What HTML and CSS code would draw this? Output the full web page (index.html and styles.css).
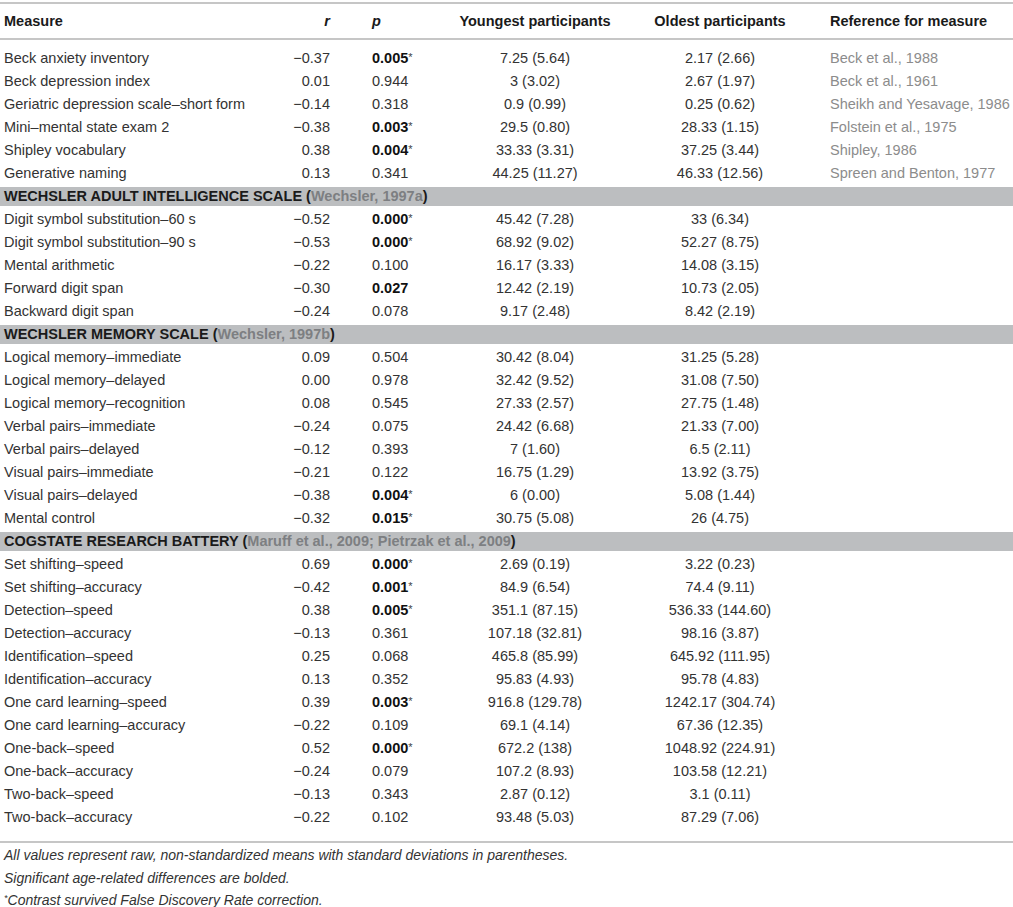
FILE: index.html
```html
<!DOCTYPE html>
<html lang="en">
<head>
    <meta charset="UTF-8">
    <meta name="viewport" content="width=device-width, initial-scale=1.0">
    <link rel="stylesheet" href="styles.css">
    <title>Age-related differences in neuropsychological measures</title>
</head>
<body class="main">

<table class="measures">
    <colgroup>
        <col class="col-measure">
        <col class="col-r">
        <col class="col-p">
        <col class="col-young">
        <col class="col-old">
        <col class="col-ref">
    </colgroup>
    <thead>
        <tr>
            <th>Measure</th>
            <th><i>r</i></th>
            <th><i>p</i></th>
            <th>Youngest participants</th>
            <th>Oldest participants</th>
            <th>Reference for measure</th>
        </tr>
    </thead>
    <tbody>
        <tr class="first"><td>Beck anxiety inventory</td><td>&minus;0.37</td><td><b>0.005</b><span class="star">*</span></td><td>7.25 (5.64)</td><td>2.17 (2.66)</td><td>Beck et al., 1988</td></tr>
        <tr><td>Beck depression index</td><td>0.01</td><td>0.944</td><td>3 (3.02)</td><td>2.67 (1.97)</td><td>Beck et al., 1961</td></tr>
        <tr><td>Geriatric depression scale&ndash;short form</td><td>&minus;0.14</td><td>0.318</td><td>0.9 (0.99)</td><td>0.25 (0.62)</td><td>Sheikh and Yesavage, 1986</td></tr>
        <tr><td>Mini&ndash;mental state exam 2</td><td>&minus;0.38</td><td><b>0.003</b><span class="star">*</span></td><td>29.5 (0.80)</td><td>28.33 (1.15)</td><td>Folstein et al., 1975</td></tr>
        <tr><td>Shipley vocabulary</td><td>0.38</td><td><b>0.004</b><span class="star">*</span></td><td>33.33 (3.31)</td><td>37.25 (3.44)</td><td>Shipley, 1986</td></tr>
        <tr><td>Generative naming</td><td>0.13</td><td>0.341</td><td>44.25 (11.27)</td><td>46.33 (12.56)</td><td>Spreen and Benton, 1977</td></tr>

        <tr class="section"><td colspan="6">WECHSLER ADULT INTELLIGENCE SCALE (<span class="cite">Wechsler, 1997a</span>)</td></tr>
        <tr><td>Digit symbol substitution&ndash;60 s</td><td>&minus;0.52</td><td><b>0.000</b><span class="star">*</span></td><td>45.42 (7.28)</td><td>33 (6.34)</td><td></td></tr>
        <tr><td>Digit symbol substitution&ndash;90 s</td><td>&minus;0.53</td><td><b>0.000</b><span class="star">*</span></td><td>68.92 (9.02)</td><td>52.27 (8.75)</td><td></td></tr>
        <tr><td>Mental arithmetic</td><td>&minus;0.22</td><td>0.100</td><td>16.17 (3.33)</td><td>14.08 (3.15)</td><td></td></tr>
        <tr><td>Forward digit span</td><td>&minus;0.30</td><td><b>0.027</b></td><td>12.42 (2.19)</td><td>10.73 (2.05)</td><td></td></tr>
        <tr><td>Backward digit span</td><td>&minus;0.24</td><td>0.078</td><td>9.17 (2.48)</td><td>8.42 (2.19)</td><td></td></tr>

        <tr class="section"><td colspan="6">WECHSLER MEMORY SCALE (<span class="cite">Wechsler, 1997b</span>)</td></tr>
        <tr><td>Logical memory&ndash;immediate</td><td>0.09</td><td>0.504</td><td>30.42 (8.04)</td><td>31.25 (5.28)</td><td></td></tr>
        <tr><td>Logical memory&ndash;delayed</td><td>0.00</td><td>0.978</td><td>32.42 (9.52)</td><td>31.08 (7.50)</td><td></td></tr>
        <tr><td>Logical memory&ndash;recognition</td><td>0.08</td><td>0.545</td><td>27.33 (2.57)</td><td>27.75 (1.48)</td><td></td></tr>
        <tr><td>Verbal pairs&ndash;immediate</td><td>&minus;0.24</td><td>0.075</td><td>24.42 (6.68)</td><td>21.33 (7.00)</td><td></td></tr>
        <tr><td>Verbal pairs&ndash;delayed</td><td>&minus;0.12</td><td>0.393</td><td>7 (1.60)</td><td>6.5 (2.11)</td><td></td></tr>
        <tr><td>Visual pairs&ndash;immediate</td><td>&minus;0.21</td><td>0.122</td><td>16.75 (1.29)</td><td>13.92 (3.75)</td><td></td></tr>
        <tr><td>Visual pairs&ndash;delayed</td><td>&minus;0.38</td><td><b>0.004</b><span class="star">*</span></td><td>6 (0.00)</td><td>5.08 (1.44)</td><td></td></tr>
        <tr><td>Mental control</td><td>&minus;0.32</td><td><b>0.015</b><span class="star">*</span></td><td>30.75 (5.08)</td><td>26 (4.75)</td><td></td></tr>

        <tr class="section"><td colspan="6">COGSTATE RESEARCH BATTERY (<span class="cite">Maruff et al., 2009; Pietrzak et al., 2009</span>)</td></tr>
        <tr><td>Set shifting&ndash;speed</td><td>0.69</td><td><b>0.000</b><span class="star">*</span></td><td>2.69 (0.19)</td><td>3.22 (0.23)</td><td></td></tr>
        <tr><td>Set shifting&ndash;accuracy</td><td>&minus;0.42</td><td><b>0.001</b><span class="star">*</span></td><td>84.9 (6.54)</td><td>74.4 (9.11)</td><td></td></tr>
        <tr><td>Detection&ndash;speed</td><td>0.38</td><td><b>0.005</b><span class="star">*</span></td><td>351.1 (87.15)</td><td>536.33 (144.60)</td><td></td></tr>
        <tr><td>Detection&ndash;accuracy</td><td>&minus;0.13</td><td>0.361</td><td>107.18 (32.81)</td><td>98.16 (3.87)</td><td></td></tr>
        <tr><td>Identification&ndash;speed</td><td>0.25</td><td>0.068</td><td>465.8 (85.99)</td><td>645.92 (111.95)</td><td></td></tr>
        <tr><td>Identification&ndash;accuracy</td><td>0.13</td><td>0.352</td><td>95.83 (4.93)</td><td>95.78 (4.83)</td><td></td></tr>
        <tr><td>One card learning&ndash;speed</td><td>0.39</td><td><b>0.003</b><span class="star">*</span></td><td>916.8 (129.78)</td><td>1242.17 (304.74)</td><td></td></tr>
        <tr><td>One card learning&ndash;accuracy</td><td>&minus;0.22</td><td>0.109</td><td>69.1 (4.14)</td><td>67.36 (12.35)</td><td></td></tr>
        <tr><td>One-back&ndash;speed</td><td>0.52</td><td><b>0.000</b><span class="star">*</span></td><td>672.2 (138)</td><td>1048.92 (224.91)</td><td></td></tr>
        <tr><td>One-back&ndash;accuracy</td><td>&minus;0.24</td><td>0.079</td><td>107.2 (8.93)</td><td>103.58 (12.21)</td><td></td></tr>
        <tr><td>Two-back&ndash;speed</td><td>&minus;0.13</td><td>0.343</td><td>2.87 (0.12)</td><td>3.1 (0.11)</td><td></td></tr>
        <tr class="last"><td>Two-back&ndash;accuracy</td><td>&minus;0.22</td><td>0.102</td><td>93.48 (5.03)</td><td>87.29 (7.06)</td><td></td></tr>
    </tbody>
</table>

<div class="notes">
    <p>All values represent raw, non-standardized means with standard deviations in parentheses.</p>
    <p>Significant age-related differences are bolded.</p>
    <p><sup>*</sup>Contrast survived False Discovery Rate correction.</p>
</div>

</body>
</html>
```

FILE: styles.css
```css
.main {
    margin: 0;
    background-color: #ffffff;
    color: #333333;
    font-family: "Liberation Sans", Arial, sans-serif;
    font-size: 14.5px;
}

.measures {
    width: 1013px;
    margin-top: 2px;
    border-collapse: collapse;
    table-layout: fixed;
    border-top: 2px solid #c6c6c6;
    border-bottom: 2px solid #c6c6c6;
}

.col-measure { width: 280px; }
.col-r { width: 60px; }
.col-p { width: 100px; }
.col-young { width: 190px; }
.col-old { width: 180px; }
.col-ref { width: 203px; }

.measures th {
    height: 34px;
    padding: 0;
    font-weight: bold;
    color: #1a1a1a;
    text-align: center;
    vertical-align: middle;
    border-bottom: 2px solid #c6c6c6;
    white-space: nowrap;
}

.measures td {
    height: 23px;
    padding: 0;
    line-height: 23px;
    white-space: nowrap;
    vertical-align: middle;
}

/* column alignment */
.measures th:nth-child(1),
.measures td:nth-child(1) {
    text-align: left;
    padding-left: 4px;
}

.measures th:nth-child(2),
.measures td:nth-child(2) {
    text-align: right;
    padding-right: 10px;
}

.measures th:nth-child(3),
.measures td:nth-child(3) {
    text-align: left;
    padding-left: 32px;
}

.measures td:nth-child(4),
.measures td:nth-child(5) {
    text-align: center;
}

.measures th:nth-child(6),
.measures td:nth-child(6) {
    text-align: left;
    padding-left: 20px;
}

.measures td:nth-child(6) {
    color: #8c8c8c;
}

.measures td b {
    color: #111111;
}

.star {
    font-size: 11px;
    line-height: 0;
    color: #444444;
    vertical-align: 2px;
}

.first td {
    padding-top: 7px;
}

.last td {
    padding-bottom: 12px;
}

.section td {
    height: 19px;
    line-height: 19px;
    padding-left: 4px;
    background-color: #bcbec0;
    border-top: 2px solid #ffffff;
    border-bottom: 2px solid #ffffff;
    font-weight: bold;
    color: #1a1a1a;
    text-align: left;
}

.section .cite {
    color: #7d7f82;
}

.notes {
    padding-top: 1px;
    padding-left: 4px;
    font-style: italic;
    font-size: 14px;
    color: #333333;
}

.notes p {
    margin: 0;
    line-height: 22.5px;
}

.notes sup {
    font-size: 9px;
    line-height: 0;
    vertical-align: 4px;
}
```
